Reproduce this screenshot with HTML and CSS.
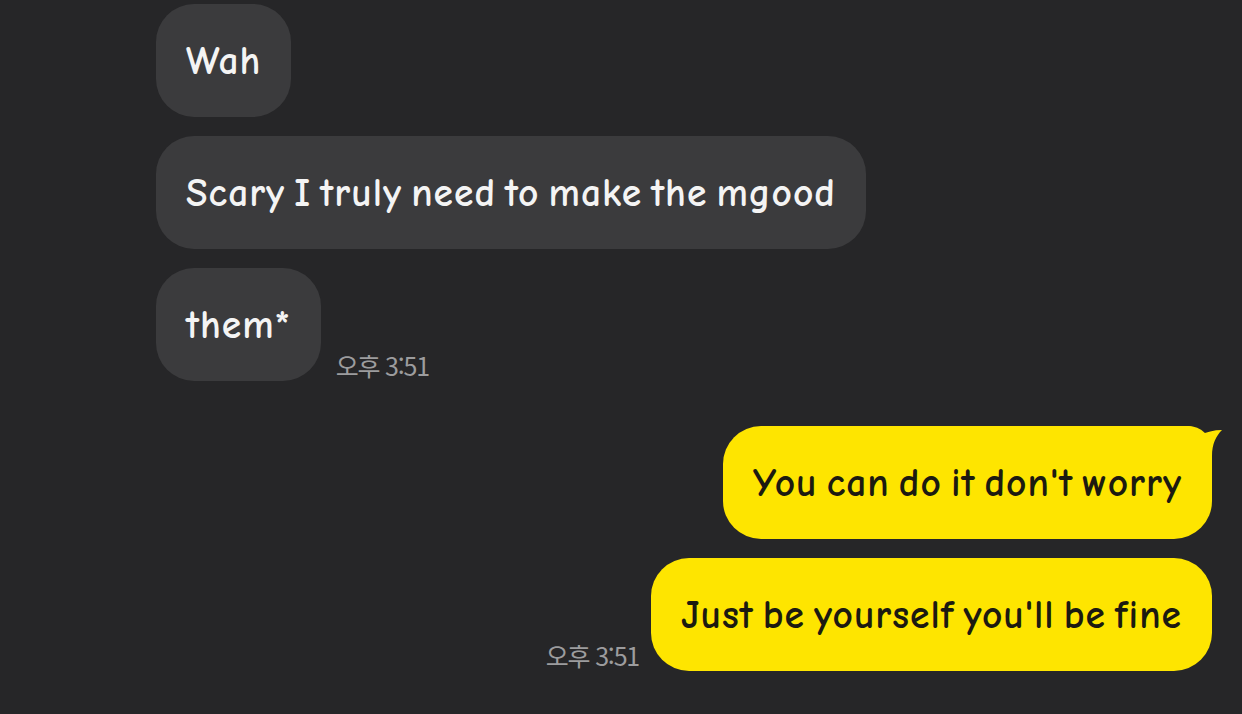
FILE: index.html
```html
<!DOCTYPE html>
<html lang="ko">
<head>
<meta charset="utf-8">
<link rel="stylesheet" href="styles.css">
</head>
<body>
<div class="chat">
  <div class="row in">
    <div class="bubble gray">Wah</div>
  </div>
  <div class="row in">
    <div class="bubble gray">Scary I truly need to make the mgood</div>
  </div>
  <div class="row in">
    <div class="bubble gray">them*</div>
    <span class="time">오후 3:51</span>
  </div>
  <div class="row out first">
    <div class="bubble yellow tailed">You can do it don't worry
      <svg class="tail" width="40" height="40" viewBox="0 0 40 40"><path d="M0 0 L6 0 C12 0 15 4 18 9 C24 6 32 4 40 4 C34 10 30 18 30 30 L30 40 L0 40 Z" fill="#fee500"/></svg>
    </div>
  </div>
  <div class="row out">
    <span class="time">오후 3:51</span>
    <div class="bubble yellow">Just be yourself you'll be fine</div>
  </div>
</div>
</body>
</html>
```
FILE: styles.css
```css
html, body {
  margin: 0;
  padding: 0;
  background: #262628;
  width: 1242px;
  height: 714px;
  overflow: hidden;
}
.chat {
  display: flex;
  flex-direction: column;
  gap: 19px;
  padding: 4px 30px 0 156px;
  font-family: "Comic Neue", "Lato", "Noto Sans", sans-serif;
}
.row {
  display: flex;
  align-items: flex-end;
  gap: 15px;
}
.row.out {
  justify-content: flex-end;
  gap: 12px;
}
.row.first {
  margin-top: 26px;
}
.bubble {
  position: relative;
  height: 113px;
  box-sizing: border-box;
  padding: 0 30px;
  display: flex;
  align-items: center;
  border-radius: 38px;
  font-size: 39.5px;
  font-weight: 700;
  letter-spacing: 1px;
  word-spacing: -6px;
}
.gray {
  background: #3b3b3d;
  color: #f4f4f4;
}
.yellow {
  background: #fee500;
  color: #1c1a10;
}
.tailed {
  border-top-right-radius: 24px;
}
.tail {
  position: absolute;
  top: 0;
  right: -10px;
}
.time {
  font-family: "Noto Sans CJK KR", "Noto Sans", sans-serif;
  font-size: 25px;
  color: #9c9c9e;
  line-height: 1;
  margin-bottom: 3px;
  letter-spacing: -1.2px;
  word-spacing: 0;
}
```
